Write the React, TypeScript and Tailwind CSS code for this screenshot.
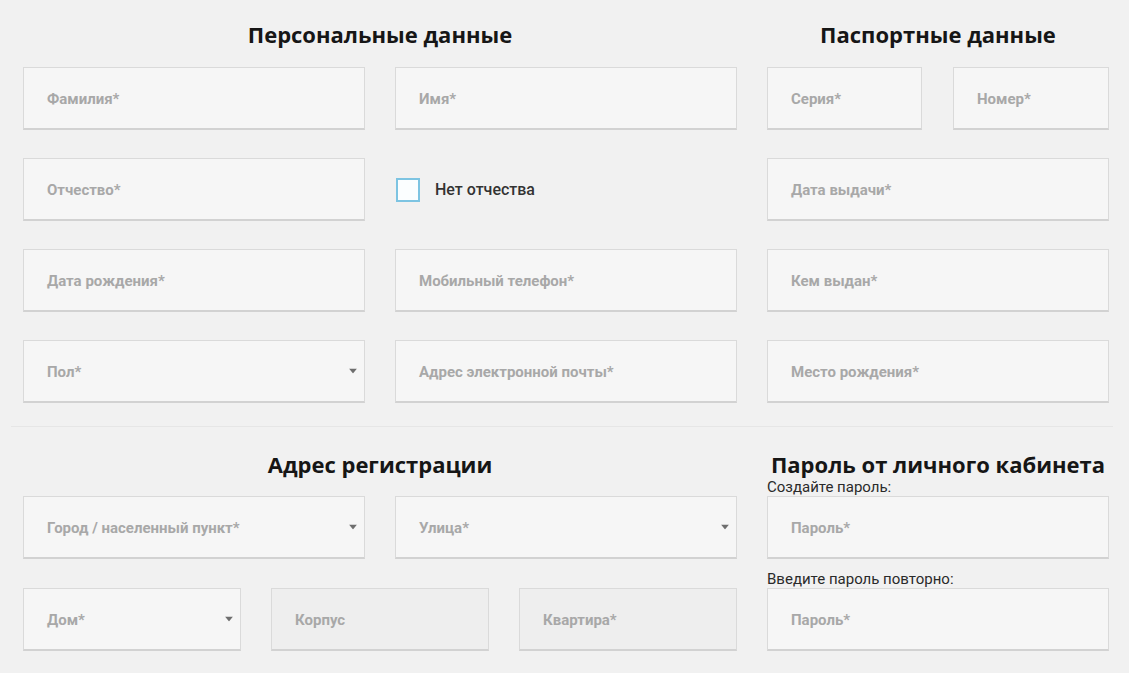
import React from "react";

const field =
  "relative flex h-[63px] items-center border border-[#dadada] border-b-2 border-b-[#d2d2d2] pl-[23px] pt-[2px] text-[15px] font-bold text-[#a8a8a8]";

function Field({
  label,
  w = "w-[342px]",
  select = false,
  disabled = false,
}: {
  label: string;
  w?: string;
  select?: boolean;
  disabled?: boolean;
}) {
  return (
    <div className={`${field} ${w} ${disabled ? "bg-[#eeeeee]" : "bg-[#f6f6f6]"}`}>
      <span>{label}</span>
      {select && (
        <svg
          className="absolute right-[7px] top-1/2 -translate-y-1/2"
          width="8"
          height="5"
          viewBox="0 0 8 5"
        >
          <path d="M0 0 H8 L4 5 Z" fill="#6e6e6e" />
        </svg>
      )}
    </div>
  );
}

function Heading({ children, cls = "" }: { children: React.ReactNode; cls?: string }) {
  return (
    <h2
      className={`h-[28px] text-center text-[22px] font-bold leading-[28px] text-[#161616] ${cls}`}
      style={{ fontFamily: '"Open Sans", "Noto Sans", sans-serif' }}
    >
      {children}
    </h2>
  );
}

export default function App() {
  return (
    <div
      className="min-h-[673px] w-[1129px] bg-[#f1f1f1] pt-[20px]"
      style={{ fontFamily: 'Roboto, "Liberation Sans", sans-serif' }}
    >
      {/* Section 1 */}
      <div className="flex gap-[30px] pl-[23px]">
        <div className="w-[714px]">
          <Heading cls="mb-[19px]">Персональные данные</Heading>
          <div className="grid grid-cols-[342px_342px] gap-x-[30px] gap-y-[28px]">
            <Field label="Фамилия*" />
            <Field label="Имя*" />
            <Field label="Отчество*" />
            <div className="flex h-[63px] items-center pl-px">
              <div className="h-[24px] w-[24px] border-2 border-[#7dc4e2] bg-[#fbfeff]" />
              <span className="ml-[15px] text-[16px] font-medium text-[#333333]">Нет отчества</span>
            </div>
            <Field label="Дата рождения*" />
            <Field label="Мобильный телефон*" />
            <Field label="Пол*" select />
            <Field label="Адрес электронной почты*" />
          </div>
        </div>
        <div className="w-[342px]">
          <Heading cls="mb-[19px]">Паспортные данные</Heading>
          <div className="flex flex-col gap-[28px]">
            <div className="flex gap-[31px]">
              <Field label="Серия*" w="w-[155px]" />
              <Field label="Номер*" w="w-[156px]" />
            </div>
            <Field label="Дата выдачи*" />
            <Field label="Кем выдан*" />
            <Field label="Место рождения*" />
          </div>
        </div>
      </div>

      {/* Separator */}
      <div className="ml-[11px] mt-[23px] h-px w-[1102px] bg-[#e6e6e6]" />

      {/* Section 2 */}
      <div className="mt-[23px] flex gap-[30px] pl-[23px]">
        <div className="w-[714px]">
          <Heading cls="mb-[18px]">Адрес регистрации</Heading>
          <div className="flex flex-col gap-[29px]">
            <div className="flex gap-[30px]">
              <Field label="Город / населенный пункт*" select />
              <Field label="Улица*" select />
            </div>
            <div className="flex gap-[30px]">
              <Field label="Дом*" w="w-[218px]" select />
              <Field label="Корпус" w="w-[218px]" disabled />
              <Field label="Квартира*" w="w-[218px]" disabled />
            </div>
          </div>
        </div>
        <div className="w-[342px]">
          <Heading cls="-ml-[4px] w-[350px] whitespace-nowrap">Пароль от личного кабинета</Heading>
          <div className="mt-px text-[15px] leading-[16px] text-[#2a2a2a]">Создайте пароль:</div>
          <div className="mt-px">
            <Field label="Пароль*" />
          </div>
          <div className="mt-[12px] text-[15px] leading-[16px] text-[#2a2a2a]">Введите пароль повторно:</div>
          <div className="mt-px">
            <Field label="Пароль*" />
          </div>
        </div>
      </div>
    </div>
  );
}
